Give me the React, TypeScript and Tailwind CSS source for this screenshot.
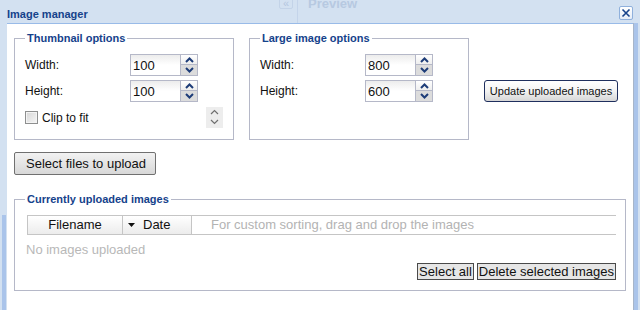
import React from "react";

function Chevron({ dir, color = "#1d3c78", width = 2 }: { dir: "up" | "down"; color?: string; width?: number }) {
  return (
    <svg width="9" height="6" viewBox="0 0 9 6" fill="none" stroke={color} strokeWidth={width}>
      {dir === "up" ? <path d="M1 5l3.5-3.5L8 5" /> : <path d="M1 1l3.5 3.5L8 1" />}
    </svg>
  );
}

function SpinField({ value }: { value: string }) {
  return (
    <div className="flex h-[22px]">
      <div className="w-[51px] h-[22px] border border-[#b5b8c8] bg-gradient-to-b from-[#ececec] via-white to-white flex items-center pl-[2px] pt-[1px] text-[13px] text-[#111]">
        {value}
      </div>
      <div className="w-[17px] flex flex-col">
        <div className="h-[11px] border border-[#b5b8c8] border-l-0 bg-gradient-to-b from-white to-[#eeeeee] flex items-center justify-center">
          <Chevron dir="up" />
        </div>
        <div className="h-[11px] border border-[#b5b8c8] border-t-0 border-l-0 bg-[#dcdcdc] flex items-center justify-center">
          <Chevron dir="down" />
        </div>
      </div>
    </div>
  );
}

function Legend({ children }: { children: React.ReactNode }) {
  return (
    <legend className="ml-[10px] px-[2px] text-[11px] font-bold leading-[13px] text-[#15428b]">{children}</legend>
  );
}

function FieldRow({ label, value }: { label: string; value: string }) {
  return (
    <div className="flex items-center h-[22px]">
      <span className="w-[105px] text-[12px] text-[#111]">{label}</span>
      <SpinField value={value} />
    </div>
  );
}

export default function App() {
  return (
    <div className="w-[640px] h-[310px] bg-[#d3e1f1] flex flex-col overflow-hidden relative font-['Liberation_Sans',Arial,sans-serif]">
      {/* page behind the modal, seen through the frame */}
      <div className="absolute left-[279px] top-[-3px] w-[14px] h-[12px] border border-[#c3d3e8] rounded-[2px] text-[11px] leading-[10px] text-[#b3c6df] text-center">
        «
      </div>
      <div className="absolute left-[297px] top-0 w-px h-[23px] bg-[#c4d4ea]" />
      <div className="absolute left-[308px] top-[-3px] text-[13px] leading-[14px] font-bold text-[#b7c9e1]">Preview</div>

      {/* Title bar */}
      <div className="h-[23px] flex items-start pt-[6px] pl-[7px] pr-[7px] relative">
        <span className="mt-[2px] text-[11px] font-bold leading-[13px] text-[#15428b]">Image manager</span>
        <button className="ml-auto w-[14px] h-[14px] border border-[#8fb0dc] rounded-[2px] bg-gradient-to-b from-white to-[#e4ecf7] flex items-center justify-center">
          <svg width="10" height="10" viewBox="0 0 10 10" stroke="#15428b" strokeWidth="1.6">
            <path d="M1.5 1.5l7 7M8.5 1.5l-7 7" />
          </svg>
        </button>
      </div>

      <div className="flex flex-1">
        {/* left frame */}
        <div className="w-[7px] flex flex-col">
          <div className="h-[192px]" />
          <div className="flex-1 ml-[2px] w-[4px] bg-[#aac4ea]" />
        </div>

        {/* Content */}
        <div className="w-[626px] bg-white border-t border-[#99bbe8] pt-[8px] px-[7px]">
          <div className="flex">
            <fieldset className="w-[220px] min-w-0 border border-[#b5b8c8]">
              <Legend>Thumbnail options</Legend>
              <div className="pt-[9px] pl-[10px] pr-[10px] pb-[11px] flex flex-col gap-[4px]">
                <FieldRow label="Width:" value="100" />
                <FieldRow label="Height:" value="100" />
                <div className="flex items-center justify-between h-[22px]">
                  <label className="flex items-center gap-[4px] pt-[1px] text-[12px] text-[#111]">
                    <span className="w-[13px] h-[13px] border border-[#8e8f8f] bg-gradient-to-br from-[#d6d6d6] to-[#f6f6f6] shadow-[inset_0_0_0_1px_#f4f4f4]" />
                    Clip to fit
                  </label>
                  <div className="w-[17px] h-[21px] bg-[#ededed] flex flex-col items-center justify-center gap-[4px]">
                    <Chevron dir="up" color="#6f6f6f" width={1.2} />
                    <Chevron dir="down" color="#6f6f6f" width={1.2} />
                  </div>
                </div>
              </div>
            </fieldset>

            <fieldset className="w-[220px] min-w-0 ml-[15px] border border-[#b5b8c8]">
              <Legend>Large image options</Legend>
              <div className="pt-[9px] pl-[10px] pr-[10px] pb-[11px] flex flex-col gap-[4px]">
                <FieldRow label="Width:" value="800" />
                <FieldRow label="Height:" value="600" />
              </div>
            </fieldset>

            <button className="self-start mt-[48px] ml-[15px] w-[134px] h-[22px] border border-[#1f2f5e] rounded-[3px] bg-gradient-to-b from-white via-[#f3f3f3] to-[#d6d6d6] text-[11px] text-[#111] flex items-center justify-center">
              Update uploaded images
            </button>
          </div>

          <button className="mt-[12px] w-[142px] h-[23px] border border-[#707070] rounded-[2px] bg-gradient-to-b from-[#f2f2f2] to-[#d8d8d8] text-[13px] text-[#111] flex items-center pl-[11px]">
            Select files to upload
          </button>

          <fieldset className="mt-[18px] w-[612px] min-w-0 border border-[#b5b8c8]">
            <Legend>Currently uploaded images</Legend>
            <div className="pt-[9px] pl-[12px] pr-[9px] pb-[10px]">
              <div className="flex h-[20px] border-y border-[#c5c5c5] text-[13px]">
                <div className="w-[96px] border-x border-[#c5c5c5] bg-gradient-to-b from-white to-[#ececec] flex items-center justify-center text-[#111]">
                  Filename
                </div>
                <div className="w-[69px] border-r border-[#c5c5c5] bg-gradient-to-b from-white to-[#ececec] flex items-center pl-[5px] gap-[8px] text-[#111]">
                  <svg width="7" height="4" viewBox="0 0 7 4" fill="#111">
                    <path d="M0 0h7L3.5 4z" />
                  </svg>
                  Date
                </div>
                <div className="flex items-center pl-[19px] text-[#b3b3b3]">
                  For custom sorting, drag and drop the images
                </div>
              </div>
              <div className="mt-[7px] text-[13px] leading-[15px] text-[#b8b8b8] -ml-[1px]">No images uploaded</div>
              <div className="mt-[6px] flex justify-end gap-[3px]">
                <button className="h-[17px] border border-[#4a4a4a] bg-[#e6e6e6] px-[1px] text-[13px] leading-[15px] text-[#111]">
                  Select all
                </button>
                <button className="h-[17px] border border-[#4a4a4a] bg-[#e6e6e6] px-[1px] text-[13px] leading-[15px] text-[#111]">
                  Delete selected images
                </button>
              </div>
            </div>
          </fieldset>
        </div>

        {/* right frame */}
        <div className="w-[7px] flex">
          <div className="w-px bg-[#a7b5c9]" />
          <div className="w-[4px] bg-[#aac4ea]" />
        </div>
      </div>
    </div>
  );
}
